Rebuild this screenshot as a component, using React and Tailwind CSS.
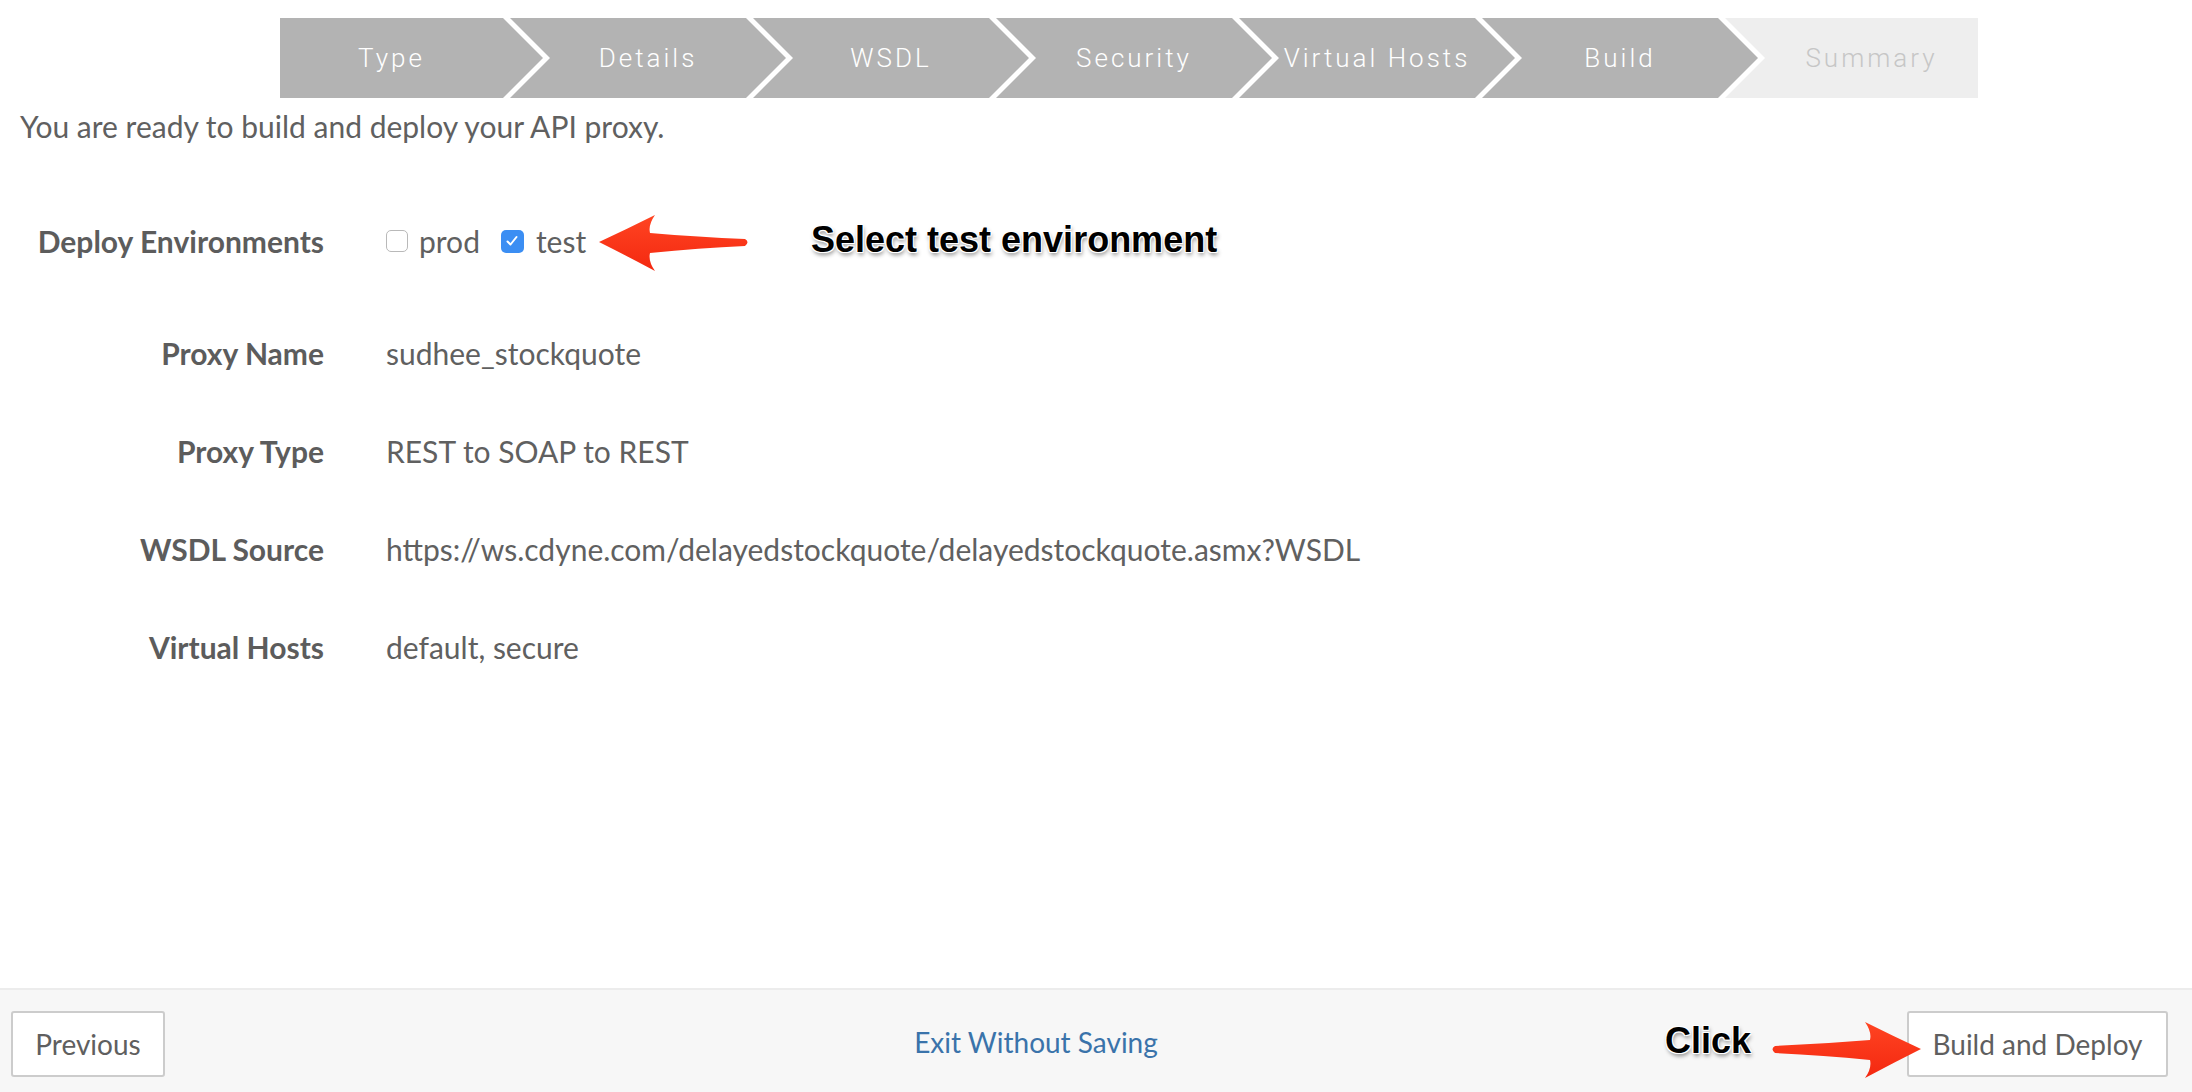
import React from 'react';

const steps = [
    { label: 'Type', shape: 'first' },
    { label: 'Details', shape: 'mid' },
    { label: 'WSDL', shape: 'mid' },
    { label: 'Security', shape: 'mid' },
    { label: 'Virtual Hosts', shape: 'mid' },
    { label: 'Build', shape: 'mid' },
    { label: 'Summary', shape: 'last' },
];

const shapeClass = {
    first: 'w-[263px] pr-[40px] bg-[#b3b3b3] text-white [clip-path:polygon(0_0,calc(100%_-_40px)_0,100%_50%,calc(100%_-_40px)_100%,0_100%)]',
    mid: 'w-[276px] -ml-[33px] px-[40px] bg-[#b3b3b3] text-white [clip-path:polygon(0_0,calc(100%_-_40px)_0,100%_50%,calc(100%_-_40px)_100%,0_100%,40px_50%)]',
    last: 'w-[253px] -ml-[33px] pl-[40px] bg-[#eeeeee] text-[#c6c6c6] [clip-path:polygon(0_0,100%_0,100%_100%,0_100%,40px_50%)]',
};

// flecha roja estilo Keynote, apunta a la izquierda por defecto
function RedArrow({ className, flip }) {
    return (
        <svg
            className={className}
            width="150"
            height="56"
            viewBox="0 0 150 56"
            style={flip ? { transform: 'scaleX(-1)' } : undefined}
        >
            <defs>
                <linearGradient id={flip ? 'ag2' : 'ag1'} x1="0" y1="0" x2="0" y2="1">
                    <stop offset="0" stopColor="#ff4422" />
                    <stop offset="1" stopColor="#f42810" />
                </linearGradient>
            </defs>
            <path
                d="M0,27 Q28,14 56,0 Q49,10 51,18 Q100,22 146,24 Q151,27 146,31 Q100,33 51,38 Q49,46 56,56 Q28,41 0,27 Z"
                fill={`url(#${flip ? 'ag2' : 'ag1'})`}
            />
        </svg>
    );
}

function Row({ label, children, className = '' }) {
    return (
        <div className={`flex items-center h-[40px] text-[30px] ${className}`}>
            <div className="w-[324px] text-right font-bold text-[#5c5c5c]">{label}</div>
            <div className="ml-[62px] flex items-center text-[#606060]">{children}</div>
        </div>
    );
}

export default function App() {
    return (
        <div className="relative h-[1092px] w-[2192px] bg-white flex flex-col text-[28px] leading-[40px] font-['Lato','Open_Sans',sans-serif] overflow-hidden">
            <main className="flex-1">
                {/* stepper */}
                <div className="mt-[18px] ml-[280px] flex h-[80px]">
                    {steps.map(s => (
                        <div
                            key={s.label}
                            className={`h-full flex items-center justify-center text-[26px] font-light tracking-[3px] font-['Roboto','Liberation_Sans',sans-serif] ${shapeClass[s.shape]}`}
                        >
                            {s.label}
                        </div>
                    ))}
                </div>

                <p className="mt-[11px] ml-[20px] text-[30px] leading-[34px] text-[#606060]">
                    You are ready to build and deploy your API proxy.
                </p>

                <Row label="Deploy Environments" className="mt-[78px]">
                    <span className="w-[22px] h-[22px] rounded-[5px] border border-[#b9b9b9] bg-white"></span>
                    <span className="ml-[11px]">prod</span>
                    <span className="ml-[21px] w-[23px] h-[23px] rounded-[5px] bg-[#3b8ef3] flex items-center justify-center">
                        <svg width="14" height="14" viewBox="0 0 14 14">
                            <path d="M2.5,7.5 L5.5,10.5 L11.5,3" fill="none" stroke="white" strokeWidth="2" strokeLinecap="round" strokeLinejoin="round" />
                        </svg>
                    </span>
                    <span className="ml-[12px]">test</span>
                </Row>

                <div className="mt-[72px] flex flex-col gap-[58px]">
                    <Row label="Proxy Name">sudhee_stockquote</Row>
                    <Row label="Proxy Type">REST to SOAP to REST</Row>
                    <Row label="WSDL Source">https://ws.cdyne.com/delayedstockquote/delayedstockquote.asmx?WSDL</Row>
                    <Row label="Virtual Hosts">default, secure</Row>
                </div>
            </main>

            <footer className="h-[104px] border-t-2 border-[#ececec] bg-[#f7f7f7] flex items-start justify-between pt-[21px] pl-[11px] pr-[24px]">
                <button className="w-[154px] h-[66px] bg-white border-2 border-[#cccccc] rounded-[3px] text-[#5f5f5f]">
                    Previous
                </button>
                <a className="mt-[11px] text-[#3a73aa]">Exit Without Saving</a>
                <button className="w-[261px] h-[66px] bg-white border-2 border-[#cccccc] rounded-[3px] text-[#5f5f5f]">
                    Build and Deploy
                </button>
            </footer>

            {/* anotaciones */}
            <RedArrow className="absolute left-[599px] top-[215px]" />
            <div className="absolute left-[811px] top-[222px] text-[36px] leading-none font-bold text-black font-['Liberation_Sans',Arial,sans-serif] [text-shadow:0_0_2px_#fff,1px_1px_0_#fff,-1px_-1px_0_#fff,1px_-1px_0_#fff,-1px_1px_0_#fff,1px_3px_4px_rgba(0,0,0,0.45)]">
                Select test environment
            </div>
            <div className="absolute left-[1665px] top-[1023px] text-[36px] leading-none font-bold text-black font-['Liberation_Sans',Arial,sans-serif] [text-shadow:0_0_2px_#fff,1px_1px_0_#fff,-1px_-1px_0_#fff,1px_-1px_0_#fff,-1px_1px_0_#fff,1px_3px_4px_rgba(0,0,0,0.45)]">
                Click
            </div>
            <RedArrow flip className="absolute left-[1771px] top-[1022px]" />
        </div>
    );
}
